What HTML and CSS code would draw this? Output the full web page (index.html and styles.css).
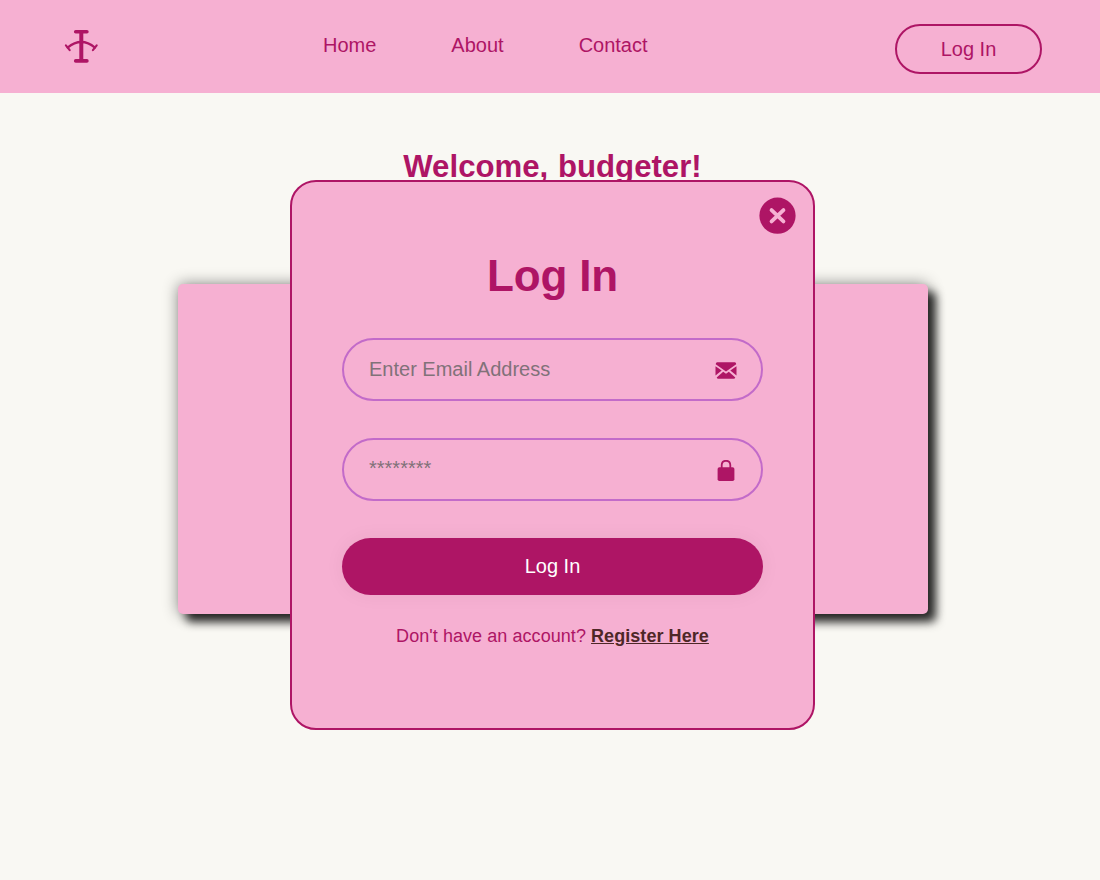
FILE: index.html
```html
<!DOCTYPE html>
<html lang="en">
<head>
<meta charset="utf-8">
<title>Budgeter</title>
<link rel="stylesheet" href="styles.css">
</head>
<body>
<header class="header">
  <a class="logo" href="#" aria-label="Home">
    <svg width="36" height="36" viewBox="0 0 36 36" fill="none" stroke="currentColor" stroke-linecap="round">
      <path d="M12.7 3.8h11.2M12.7 32.9h11.2" stroke-width="3.6"/>
      <path d="M18.3 3.8v29" stroke-width="4" stroke-linecap="butt"/>
      <path d="M4.6 19.6Q18.3 8.4 32 19.6" stroke-width="2.2"/>
      <path d="M2.9 17.4l3.8 4.8M33.7 17.4l-3.8 4.8" stroke-width="2.1"/>
    </svg>
  </a>
  <nav class="nav">
    <a href="#">Home</a>
    <a href="#">About</a>
    <a href="#">Contact</a>
  </nav>
  <button class="nav-login">Log In</button>
</header>
<main class="main">
  <h1 class="welcome">Welcome, budgeter!</h1>
  <section class="panel"></section>
</main>
<div class="modal">
  <button class="close" aria-label="Close">
    <svg width="37" height="37" viewBox="0 0 37 37"><circle class="disc" cx="18.5" cy="18.5" r="18.3"/><path class="cross" d="M12.5 12.8l12 11.4M24.5 12.8l-12 11.4"/></svg>
  </button>
  <h2 class="title">Log In</h2>
  <form class="form">
    <label class="field">
      <input type="email" placeholder="Enter Email Address">
      <svg width="22" height="22" viewBox="0 0 22 22" fill="currentColor"><path d="M2 2.3h18q1.3.4 1.2 2L11 11.6.7 4.3Q.7 2.6 2 2.3zM.5 6.2l6.2 4.4L.5 15.6zM21.5 6.2l-6.2 4.4 6.2 5zM8.2 11.7L11 13.7l2.8-2 6.5 5.8q-.4 1.2-1.6 1.2H3.3q-1.2 0-1.6-1.2z"/></svg>
    </label>
    <label class="field field-password">
      <input type="password" placeholder="********">
      <svg width="22" height="22" viewBox="0 0 22 22"><rect x="2.6" y="7.3" width="16.8" height="13.7" rx="1.8" fill="currentColor"/><path d="M6.7 9V5q.2-4.2 4.3-4.2T15.3 5v4" fill="none" stroke="currentColor" stroke-width="1.8"/></svg>
    </label>
    <button class="submit" type="button">Log In</button>
  </form>
  <p class="register">Don't have an account? <a href="#">Register Here</a></p>
</div>
</body>
</html>
```
FILE: styles.css
```css
* { box-sizing: border-box; margin: 0; padding: 0; }
body {
  font-family: "Liberation Sans", Arial, sans-serif;
  background: #f9f8f3;
  color: #ae1565;
  min-height: 880px;
}
a { color: inherit; text-decoration: none; }
button { font: inherit; color: inherit; border: 0; background: none; }
svg { display: block; }
.header {
  height: 93px;
  display: flex;
  align-items: flex-start;
  padding: 24px 58px 0 63px;
  background: #f6b0d2;
}
.logo { padding-top: 4px; width: 36px; }
.nav { display: flex; gap: 75px; padding: 10px 0 0; margin-left: 224px; font-size: 20px; line-height: 23px; }
.nav-login {
  width: 147px;
  height: 50px;
  margin-left: auto;
  border: 2px solid #ae1565;
  border-radius: 25px;
  font-size: 20px;
}
.main { display: flex; flex-direction: column; align-items: center; padding: 55px 0 0 5px; }
.welcome { font-size: 31.2px; line-height: 37px; word-spacing: 1px; }
.panel {
  width: 750px;
  height: 330px;
  margin-top: 99px;
  background: #f6b0d2;
  border-radius: 5px;
  box-shadow: 8px 8px 10px rgba(0, 0, 0, .8), 0 0 15px rgba(0, 0, 0, .45);
}
.modal {
  position: absolute;
  top: 180px;
  left: 290px;
  width: 525px;
  height: 550px;
  padding: 68px 50px 0;
  background: #f6b0d2;
  border: 2px solid #ae1565;
  border-radius: 26px;
}
.close { position: absolute; top: 15px; right: 17px; }
.close svg { padding-top: .4px; }
.disc { fill: #ae1565; }
.cross { stroke: #f6b0d2; stroke-width: 3.9; stroke-linecap: round; }
.title { font-size: 44px; line-height: 51px; letter-spacing: -.2px; text-align: center; }
.form { display: flex; flex-direction: column; gap: 37px; padding-top: 37px; }
.field {
  display: flex;
  align-items: center;
  height: 63px;
  padding: 0 24.5px 0 25px;
  border: 2px solid #c26bc9;
  border-radius: 32px;
}
.field svg { margin-top: 2px; }
.field input {
  flex: 1;
  min-width: 0;
  height: 57px;
  border: 0;
  outline: 0;
  background: none;
  font: 20px "Liberation Sans", Arial, sans-serif;
}
.field-password input { padding-bottom: 3px; }
.field input::placeholder { color: #817279; }
.submit {
  height: 57px;
  border-radius: 29px;
  background: #ae1565;
  color: #fff;
  font-size: 20px;
  box-shadow: 0 0 20px rgba(0, 0, 0, .05);
}
.register { margin-top: 31px; font-size: 18px; line-height: 21px; letter-spacing: .06px; text-align: center; }
.register a { color: #4e2727; font-weight: bold; text-decoration: underline; }
```
